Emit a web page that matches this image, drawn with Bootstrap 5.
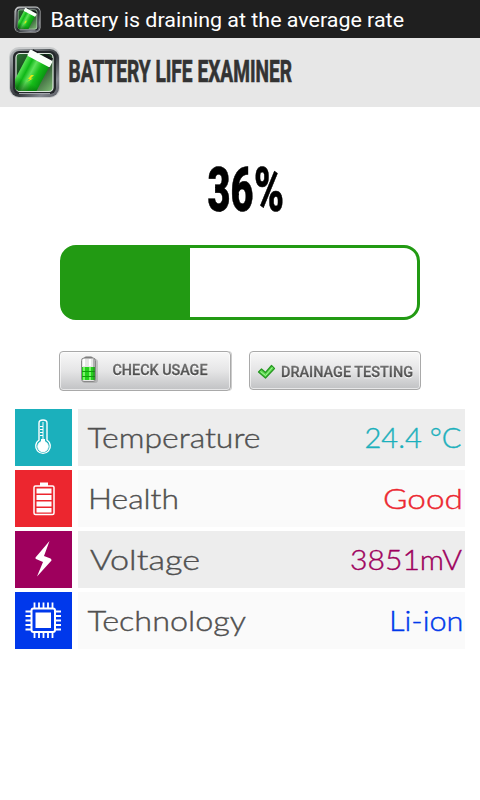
<!DOCTYPE html>
<html lang="en">
<head>
<meta charset="utf-8">
<meta name="viewport" content="width=device-width, initial-scale=1">
<title>Battery Life Examiner</title>
<link rel="stylesheet" href="https://cdn.jsdelivr.net/npm/bootstrap@5.3.0/dist/css/bootstrap.min.css">
<style>
body{font-family:Roboto,"Liberation Sans",sans-serif;width:480px;height:800px;overflow:hidden;background:#fff}
svg{display:block;flex:none}
svg text{font-family:Roboto,"Liberation Sans",sans-serif}
.status{height:38px;background:#1f1f1f;padding-left:14px}
.appbar{height:69px;background:#e7e7e7}
.level{height:138px}
.gauge{width:360px;height:75px;margin:0 60px;border:3px solid #229a13;border-radius:16px;background:#fff}
.gauge .progress-bar{background:#229a13;border-radius:9px 0 0 9px}
.actions{padding:31px 59px 0;gap:18px}
.key{width:172px;height:39px;border:1px solid #a9a9a9;border-radius:4px;background:linear-gradient(#f8f8f8,#e5e5e6 50%,#c1c2c4);box-shadow:inset 0 0 0 1px rgba(255,255,255,.6)}
.raised{height:40px;box-shadow:inset 0 0 0 1px rgba(255,255,255,.6),1px 0 0 #ccc}
.key svg text{filter:drop-shadow(0 1px 0 #fff)}
.readings{padding:19px 15px 0;gap:4px;margin-top:-1px}
.tile{width:57px;height:57px}
.cell{height:57px;background:#fafafa;margin-left:6px}
.shade{background:#ededed}
.cell svg text{font-family:Lato,sans-serif;font-size:27.5px;font-weight:300;stroke-width:.4px}
.c1{background:#1bb0bc}.c2{background:#ec262f}.c3{background:#9e005d}.c4{background:#0038eb}
</style>
<script src="https://cdn.jsdelivr.net/npm/bootstrap@5.3.0/dist/js/bootstrap.bundle.min.js"></script>
</head>
<body>
<svg width="0" height="0" class="position-absolute">
<defs>
<linearGradient id="metal" x1="0" y1="0" x2="1" y2="1"><stop offset="0" stop-color="#b7babd"/><stop offset=".3" stop-color="#6d7276"/><stop offset=".55" stop-color="#33373b"/><stop offset=".8" stop-color="#858991"/><stop offset="1" stop-color="#55575e"/></linearGradient>
<linearGradient id="pit" x1="0" y1="0" x2="1" y2="1"><stop offset="0" stop-color="#2d7634"/><stop offset=".45" stop-color="#102f17"/><stop offset="1" stop-color="#82c078"/></linearGradient>
<linearGradient id="cellg"><stop offset="0" stop-color="#5ae656"/><stop offset=".25" stop-color="#10b818"/><stop offset=".45" stop-color="#5fe05a"/><stop offset=".7" stop-color="#16bd18"/><stop offset="1" stop-color="#0a9612"/></linearGradient>
<linearGradient id="fade" x1="0" y1="0" x2="0" y2="1"><stop offset=".6" stop-color="#053b08" stop-opacity="0"/><stop offset="1" stop-color="#053b08" stop-opacity=".8"/></linearGradient>
<linearGradient id="ink" x1="0" y1="0" x2="0" y2="1"><stop offset="0" stop-color="#7c7c7c"/><stop offset="1" stop-color="#3c3c3c"/></linearGradient>
<clipPath id="inside"><path d="M7 0H52V40Q52 45 46 45H13Q7 45 7 40Z"/></clipPath>
<symbol id="logo" viewBox="0 0 53 53">
<rect x="1" y="1" width="51" height="51" rx="10" fill="#c9cbcc"/>
<rect x="2" y="3" width="49" height="48" rx="9" fill="url(#metal)"/>
<rect x="5" y="5" width="43" height="43" rx="6" fill="#24282b"/>
<rect x="8" y="7.500" width="37" height="38" rx="4" fill="url(#pit)" stroke="#dde8de" stroke-width="1.200"/>
<g clip-path="url(#inside)"><g transform="translate(22.500 4) rotate(28)">
<path d="M2-2H8V1H2ZM14-3H24V2H14Z" fill="#15171a"/>
<rect x="0" y="0" width="24.500" height="45" rx="1.500" fill="url(#cellg)"/>
<rect x="0" y="6" width="24.500" height="39" fill="url(#fade)"/>
<rect x="-.5" y="-.5" width="25.500" height="7" rx="1.500" fill="#fafffa"/></g></g>
<path d="M23 29L20 33H22L19 36L25 32.500H22.500L26 29Z" fill="#e7e715"/>
<path d="M11 47.500H42" stroke="#c5c8cf" stroke-width=".8"/>
</symbol>
</defs>
</svg>

<header>
<div class="status d-flex align-items-center">
<svg width="27" height="27"><use href="#logo"/></svg>
<svg class="ms-2" width="400" height="38"><text x="1.500" y="27" font-size="20.500" fill="#fff" textLength="353.500" lengthAdjust="spacingAndGlyphs">Battery is draining at the average rate</text></svg>
</div>
<div class="appbar navbar p-0 ps-2 d-flex flex-nowrap justify-content-start">
<svg width="53" height="53"><use href="#logo"/></svg>
<svg width="400" height="69"><text x="7.500" y="44" font-size="30.500" font-weight="700" fill="#333" stroke="#333" stroke-width=".7" textLength="223.500" lengthAdjust="spacingAndGlyphs">BATTERY LIFE EXAMINER</text></svg>
</div>
</header>

<main>
<div class="level d-flex justify-content-center">
<svg width="480" height="138"><text x="207.500" y="103.500" font-size="62" font-weight="900" stroke="#000" stroke-width=".6" textLength="46" lengthAdjust="spacingAndGlyphs">36</text><text x="254" y="103.500" font-size="62" font-weight="900" stroke="#000" stroke-width=".6" textLength="30" lengthAdjust="spacingAndGlyphs">%</text></svg>
</div>
<div class="gauge d-flex"><div class="progress-bar" role="progressbar" aria-valuenow="36" style="width:127px"></div></div>

<div class="actions d-flex">
<button class="key raised btn p-0 d-flex" type="button" aria-label="Check usage">
<svg width="170" height="37">
<rect x="22" y="7" width="16" height="24" rx="3" fill="#777" opacity=".35"/>
<rect x="24" y="4.500" width="9" height="4" rx="2" fill="#777"/>
<rect x="21.500" y="6" width="14" height="23.500" rx="2.500" fill="#e6e6e6" stroke="#888"/>
<path d="M22 15H35V28H22Z" fill="#24cf1c"/><path d="M23 15H25V28H23ZM29 15H31V28H29Z" fill="#7bf36b"/>
<path d="M22 19.500H35M22 24.500H35" stroke="#109d0c"/><path d="M24 7V14M30 7V14" stroke="#fff" stroke-width="2"/><path d="M34 7V28" stroke="#444" opacity=".65"/>
<text x="52.500" y="23" font-size="15.500" font-weight="500" fill="url(#ink)" stroke="url(#ink)" stroke-width=".3" textLength="95" lengthAdjust="spacingAndGlyphs">CHECK USAGE</text>
</svg></button>
<button class="key btn p-0 d-flex" type="button" aria-label="Drainage testing">
<svg width="170" height="37">
<path d="M8.500 20L11.500 17L15.500 20.500L21.500 13.500L24.500 16.500L15.500 26Z" fill="#58d94b" stroke="#279722" stroke-width="1.200" stroke-linejoin="round"/><path d="M10.500 19.500L15.500 23.500L22.500 15.500" stroke="#a5f498" fill="none"/>
<text x="31" y="25" font-size="15.500" font-weight="500" fill="url(#ink)" stroke="url(#ink)" stroke-width=".3" textLength="132" lengthAdjust="spacingAndGlyphs">DRAINAGE TESTING</text>
</svg></button>
</div>

<section class="readings d-flex flex-column">
<div class="d-flex">
<div class="tile c1"><svg width="57" height="57" fill="none" stroke="#fff"><path d="M24 31V14Q24 11 28 11T32 14V31A7.300 7.300 0 1 1 24 31Z" stroke-width="1.400"/><circle cx="28" cy="37.500" r="5.200" fill="#fff"/><path d="M28 30V37" stroke-width="4"/><path d="M25 17.500H28M25 20.500H28M25 23.500H28M25 26.500H28M28 13V30" stroke-width="1"/></svg></div>
<div class="cell shade flex-fill"><svg width="387" height="57" fill="#505050" stroke="#505050"><text x="9.500" y="39" textLength="173" lengthAdjust="spacingAndGlyphs">Temperature</text><text x="286.500" y="39" fill="#1bb0bc" stroke="#1bb0bc" textLength="97" lengthAdjust="spacingAndGlyphs">24.4 °C</text></svg></div></div>
<div class="d-flex">
<div class="tile c2"><svg width="57" height="57"><path d="M25 12.500H33V16H25Z" fill="#fff"/><rect x="19" y="16" width="20" height="28.500" rx="1.500" fill="none" stroke="#fff" stroke-width="1.500"/><path d="M21.500 18.500H36.500V23.500H21.500ZM21.500 25H36.500V30H21.500ZM21.500 31.500H36.500V36.500H21.500ZM21.500 38H36.500V42.500H21.500Z" fill="#fff"/></svg></div>
<div class="cell flex-fill"><svg width="387" height="57" fill="#505050" stroke="#505050"><text x="10" y="39" textLength="91" lengthAdjust="spacingAndGlyphs">Health</text><text x="305" y="39" fill="#ec262f" stroke="#ec262f" textLength="80" lengthAdjust="spacingAndGlyphs">Good</text></svg></div></div>
<div class="d-flex">
<div class="tile c3"><svg width="57" height="57"><path d="M34.500 10L20.500 26.500Q20.300 27.500 21 28L28 31L22 45.500L36.500 29.500Q36.500 28 35.500 27.500L29 25Z" fill="#fff"/></svg></div>
<div class="cell shade flex-fill"><svg width="387" height="57" fill="#505050" stroke="#505050"><text x="12" y="39" textLength="110" lengthAdjust="spacingAndGlyphs">Voltage</text><text x="272" y="39" fill="#9e005d" stroke="#9e005d" textLength="112" lengthAdjust="spacingAndGlyphs">3851mV</text></svg></div></div>
<div class="d-flex">
<div class="tile c4"><svg width="57" height="57"><rect x="16.500" y="16.500" width="23.500" height="23.500" rx="2" fill="none" stroke="#fff" stroke-width="2"/><path d="M20.500 20.500H36V36H20.500Z" fill="#fff"/><path d="M19.500 10.500V16M24 10.500V16M28.500 10.500V16M33 10.500V16M37.500 10.500V16M19.500 40.500V46M24 40.500V46M28.500 40.500V46M33 40.500V46M37.500 40.500V46M10.500 19.500H16M10.500 24H16M10.500 28.500H16M10.500 33H16M10.500 37.500H16M40.500 19.500H46M40.500 24H46M40.500 28.500H46M40.500 33H46M40.500 37.500H46" stroke="#fff" stroke-width="1.800"/></svg></div>
<div class="cell flex-fill"><svg width="387" height="57" fill="#505050" stroke="#505050"><text x="9.500" y="39" textLength="158.500" lengthAdjust="spacingAndGlyphs">Technology</text><text x="311" y="39" fill="#0038eb" stroke="#0038eb" textLength="74.500" lengthAdjust="spacingAndGlyphs">Li-ion</text></svg></div></div>
</section>
</main>
</body>
</html>
